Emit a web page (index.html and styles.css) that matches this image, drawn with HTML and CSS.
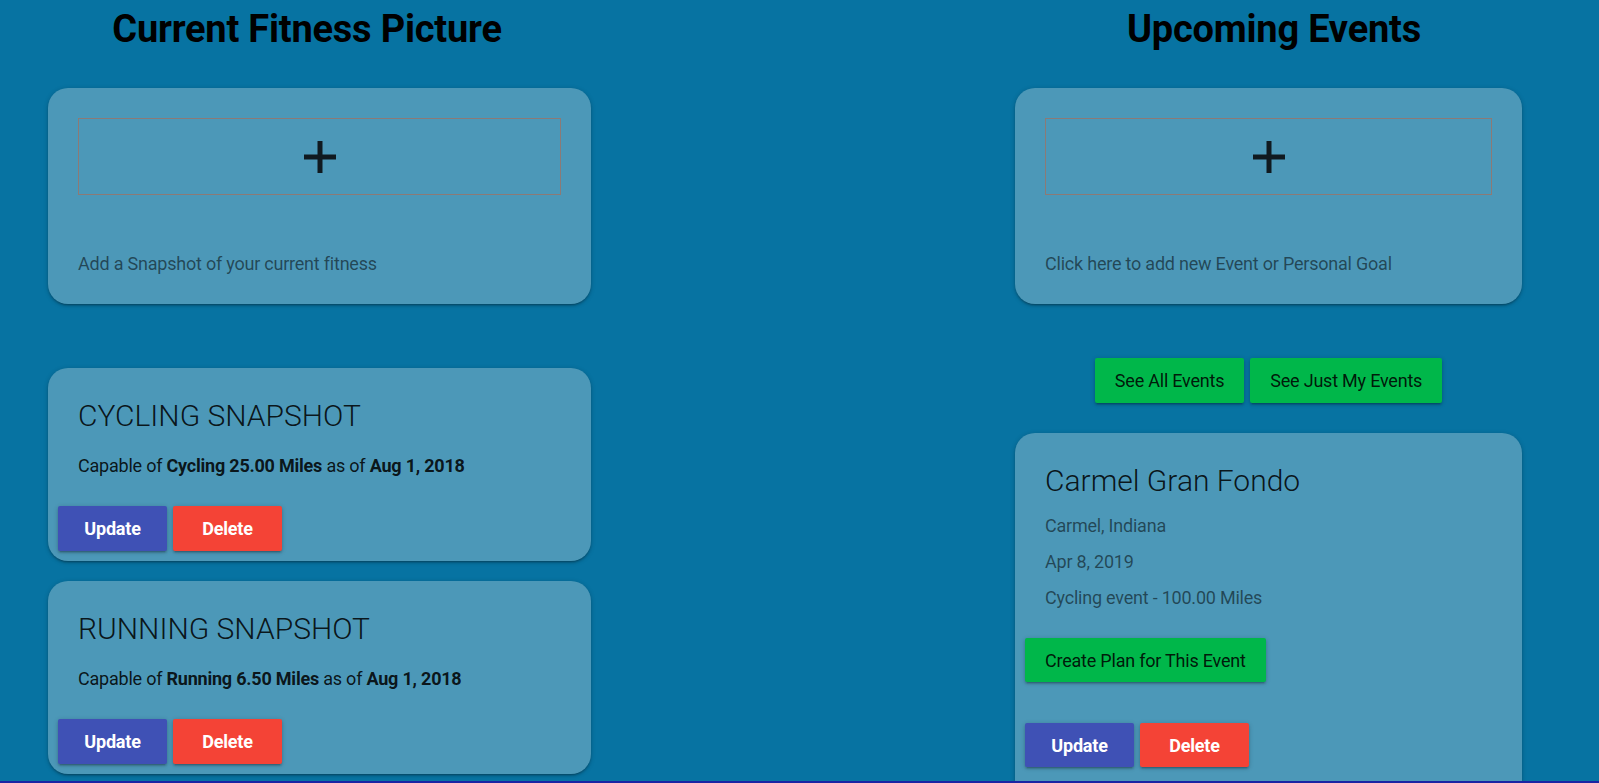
FILE: index.html
```html
<!DOCTYPE html>
<html lang="en">
<head>
<meta charset="utf-8">
<title>Fitness Dashboard</title>
<link rel="stylesheet" href="styles.css">
</head>
<body>
<main class="page">
  <section class="col col-left">
    <h1 class="col-title">Current Fitness Picture</h1>
    <div class="card-list">
      <div class="card add-card">
        <div class="add-box">
          <svg class="plus" width="32" height="32" viewBox="0 0 32 32"><path d="M16 0V32M0 16H32" stroke="#101a20" stroke-width="5"/></svg>
        </div>
        <p class="add-text">Add a Snapshot of your current fitness</p>
      </div>

      <div class="card snap-card first-snap">
        <div class="card-content">
          <h2 class="card-title">CYCLING SNAPSHOT</h2>
          <p class="snap-text">Capable of <b>Cycling 25.00 Miles</b> as of <b>Aug 1, 2018</b></p>
        </div>
        <div class="card-actions">
          <button class="btn btn-update">Update</button>
          <button class="btn btn-delete">Delete</button>
        </div>
      </div>

      <div class="card snap-card">
        <div class="card-content">
          <h2 class="card-title">RUNNING SNAPSHOT</h2>
          <p class="snap-text">Capable of <b>Running 6.50 Miles</b> as of <b>Aug 1, 2018</b></p>
        </div>
        <div class="card-actions">
          <button class="btn btn-update">Update</button>
          <button class="btn btn-delete">Delete</button>
        </div>
      </div>
    </div>
  </section>

  <section class="col col-right">
    <h1 class="col-title">Upcoming Events</h1>
    <div class="card-list">
      <div class="card add-card">
        <div class="add-box">
          <svg class="plus" width="32" height="32" viewBox="0 0 32 32"><path d="M16 0V32M0 16H32" stroke="#101a20" stroke-width="5"/></svg>
        </div>
        <p class="add-text">Click here to add new Event or Personal Goal</p>
      </div>

      <div class="filter-row">
        <button class="btn btn-green">See All Events</button>
        <button class="btn btn-green">See Just My Events</button>
      </div>

      <div class="card event-card">
        <div class="card-content event-content">
          <h2 class="card-title">Carmel Gran Fondo</h2>
          <p class="event-line">Carmel, Indiana</p>
          <p class="event-line">Apr 8, 2019</p>
          <p class="event-line">Cycling event - 100.00 Miles</p>
        </div>
        <div class="card-actions">
          <button class="btn btn-green btn-tall">Create Plan for This Event</button>
        </div>
        <div class="card-actions event-edit">
          <button class="btn btn-update btn-tall">Update</button>
          <button class="btn btn-delete btn-tall">Delete</button>
        </div>
      </div>
    </div>
  </section>
</main>
<div class="bottom-bar"></div>
</body>
</html>
```

FILE: styles.css
```css
* { box-sizing: border-box; }

html, body {
  margin: 0;
  padding: 0;
}

body {
  height: 100vh;
  overflow: hidden;
  background: #0773a2;
  font-family: Roboto, "Noto Sans", Arial, sans-serif;
  font-size: 18px;
  letter-spacing: -0.012em;
  color: rgba(0, 0, 0, 0.87);
}

.page {
  display: flex;
  justify-content: space-between;
}

.col-left { width: 614px; }
.col-right { width: 650px; }

.col-title {
  margin: 7px 0 0;
  font-size: 38px;
  line-height: 44px;
  font-weight: 700;
  color: #000;
  text-align: center;
}

.card-list {
  display: flex;
  flex-direction: column;
  margin-top: 37px;
}

.col-left .card-list { margin-left: 48px; width: 543px; }
.col-right .card-list { margin-left: 66px; width: 507px; }

.card {
  background: #4c98b8;
  border-radius: 20px;
  box-shadow: 0 2px 2px rgba(0,0,0,0.14), 0 3px 1px -2px rgba(0,0,0,0.12), 0 1px 5px rgba(0,0,0,0.2);
}

.add-card {
  padding: 30px;
}

.add-box {
  height: 77px;
  border: 1px solid #8c7a76;
  display: flex;
  align-items: center;
  justify-content: center;
}

.plus { display: block; }

.add-text {
  margin: 58px 0 0;
  line-height: 21px;
  font-weight: 400;
  color: rgba(0, 0, 0, 0.54);
}

.first-snap { margin-top: 64px; }
.snap-card + .snap-card { margin-top: 20px; }

.card-content {
  padding: 30px 30px 20px;
}

.card-title {
  margin: 0;
  font-size: 30px;
  line-height: 36px;
  font-weight: 300;
  letter-spacing: 0;
  color: rgba(0, 0, 0, 0.87);
}

.snap-text {
  margin: 21px 0 0;
  line-height: 21px;
  font-weight: 400;
}

.snap-text b { font-weight: 700; }

.card-actions {
  display: flex;
  gap: 6px;
  padding: 10px;
}

.btn {
  height: 45px;
  border: none;
  border-radius: 2px;
  font-family: Roboto, "Noto Sans", Arial, sans-serif;
  font-size: 18px;
  letter-spacing: -0.012em;
  padding: 0 20px;
  cursor: pointer;
  box-shadow: 0 2px 2px rgba(0,0,0,0.14), 0 3px 1px -2px rgba(0,0,0,0.12), 0 1px 5px rgba(0,0,0,0.2);
}

.btn-update, .btn-delete {
  width: 109px;
  padding: 0;
  color: #fff;
  font-weight: 700;
}

.btn-update { background: #3f51b5; }
.btn-delete { background: #f44336; }

.btn-green {
  background: #00b74a;
  color: rgba(0, 0, 0, 0.87);
  font-weight: 400;
}

.btn-tall { height: 44px; }

.filter-row {
  display: flex;
  justify-content: center;
  gap: 6px;
  margin-top: 54px;
}

.event-card {
  margin-top: 30px;
  padding-bottom: 60px;
  border-radius: 20px 20px 0 0;
}

.event-content {
  padding-bottom: 20px;
}

.event-line {
  margin: 16px 0 0;
  line-height: 21px;
  color: rgba(0, 0, 0, 0.54);
}

.event-line + .event-line { margin-top: 15px; }

.event-edit { margin-top: 21px; }

.bottom-bar {
  position: fixed;
  left: 0;
  right: 0;
  bottom: 0;
  height: 2px;
  background: #1b24a3;
}
```
